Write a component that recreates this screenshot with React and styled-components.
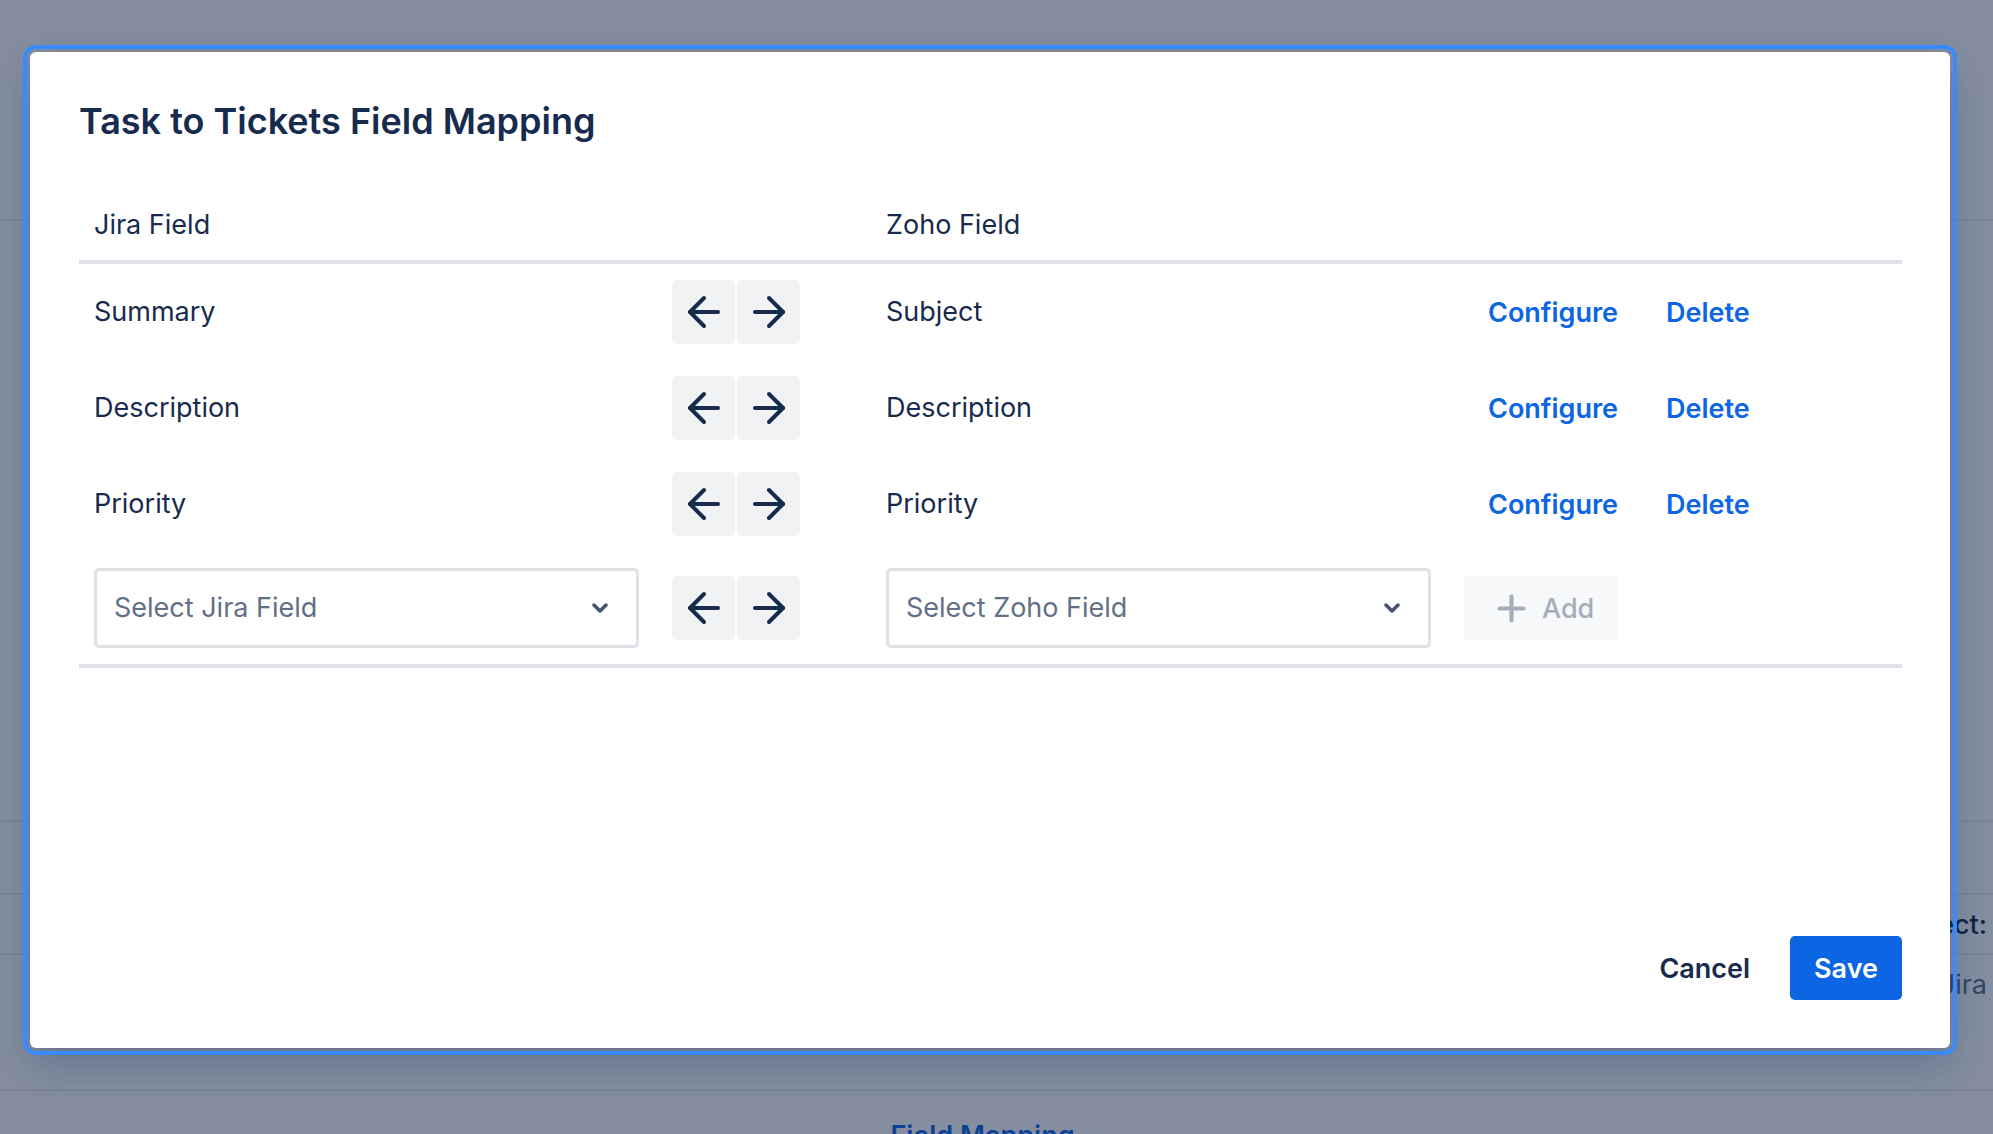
import styled, { createGlobalStyle } from "styled-components";
import { ArrowLeft, ArrowRight, Plus } from "lucide-react";

const GlobalStyle = createGlobalStyle`
  html, body {
    margin: 0;
    padding: 0;
  }
  body {
    font-family: Inter, "Liberation Sans", sans-serif;
    color: #172b4d;
  }
  * {
    box-sizing: border-box;
  }
`;

// page behind the dialog
const Page = styled.div`
  position: relative;
  width: 1993px;
  height: 1134px;
  overflow: hidden;
  background: #ffffff;
  display: flex;
  flex-direction: column;
`;
const PageHeader = styled.header`
  height: 221px;
  flex-shrink: 0;
  border-bottom: 2px solid #ebecf0;
`;
const PageBody = styled.section`
  height: 601px;
  flex-shrink: 0;
  border-bottom: 2px solid #ebecf0;
`;
const Details = styled.section`
  height: 269px;
  flex-shrink: 0;
  border-bottom: 2px solid #ebecf0;
  display: flex;
  flex-direction: column;
  padding-top: 71px;
`;
const DetailRow = styled.div`
  height: 60px;
  display: flex;
  align-items: center;
  justify-content: flex-end;
  padding-right: 6px;
  border-top: 2px solid #ebecf0;
  font-size: 27px;
  color: ${(p) => (p.$muted ? "#626f86" : "#172b4d")};
  font-weight: ${(p) => (p.$muted ? 400 : 500)};
`;
const Tabs = styled.nav`
  display: flex;
  justify-content: center;
  padding: 28px 28px 0 0;
`;
const Tab = styled.span`
  font-size: 27px;
  font-weight: 600;
  color: #0c66e4;
`;

// dialog
const Blanket = styled.div`
  position: absolute;
  inset: 0;
  background: rgba(9, 30, 66, 0.5);
`;
const Modal = styled.div`
  position: absolute;
  left: 30px;
  top: 52px;
  width: 1920px;
  height: 996px;
  background: #ffffff;
  border-radius: 6px;
  outline: 4px solid #388bff;
  outline-offset: 3px;
  box-shadow: 0 16px 40px rgba(9, 30, 66, 0.25);
  display: flex;
  flex-direction: column;
  padding: 46px 48px 48px 49px;
`;
const Title = styled.h1`
  margin: 0 0 54px;
  font-size: 36px;
  line-height: 46px;
  font-weight: 600;
  color: #172b4d;
`;

const Row = styled.div`
  display: grid;
  grid-template-columns: 578px 214px 578px 1fr;
  align-items: center;
  padding: ${(p) => (p.$head ? "8px 0 16px" : "16px 0")};
  border-bottom: ${(p) => (p.$divider ? "4px solid #dfe1e6" : "none")};
  font-size: 27px;
  line-height: 38px;
`;
const Cell = styled.div`
  padding: 0 18px 0 15px;
  display: flex;
  align-items: center;
`;

const ArrowGroup = styled.div`
  display: flex;
  gap: 2px;
`;
const ArrowButton = styled.button`
  width: 63px;
  height: 64px;
  border: none;
  border-radius: 5px;
  background: #f1f2f4;
  color: #172b4d;
  display: flex;
  align-items: center;
  justify-content: center;
  padding: 0;
  cursor: pointer;
`;

const LinkButton = styled.button`
  height: 64px;
  padding: 0 24px;
  border: none;
  background: none;
  font-family: inherit;
  font-size: 27px;
  font-weight: 600;
  color: #0c66e4;
  cursor: pointer;
`;

const Select = styled.div`
  width: 545px;
  height: 80px;
  border: 3px solid #dfe1e6;
  border-radius: 5px;
  background: #ffffff;
  display: flex;
  align-items: center;
  justify-content: space-between;
  padding: 0 28px 0 17px;
  color: #626f86;
  font-size: 27px;
`;

const AddButton = styled.button`
  height: 64px;
  padding: 0 24px;
  border: none;
  border-radius: 5px;
  background: #f7f8f9;
  color: #a5adba;
  display: flex;
  align-items: center;
  gap: 8px;
  font-family: inherit;
  font-size: 27px;
  font-weight: 500;
`;
const IconSlot = styled.span`
  width: 46px;
  display: flex;
  justify-content: center;
`;

const Footer = styled.footer`
  margin-top: auto;
  display: flex;
  justify-content: flex-end;
  gap: 16px;
`;
const FooterButton = styled.button`
  height: 64px;
  padding: 0 24px;
  border: none;
  border-radius: 5px;
  background: ${(p) => (p.$primary ? "#0c66e4" : "transparent")};
  color: ${(p) => (p.$primary ? "#ffffff" : "#172b4d")};
  font-family: inherit;
  font-size: 27px;
  font-weight: 600;
  cursor: pointer;
`;

const Chevron = () => (
  <svg width="16" height="10" viewBox="0 0 16 10" fill="none">
    <path
      d="M2 2l6 6 6-6"
      stroke="#44546f"
      strokeWidth="3.5"
      strokeLinecap="round"
      strokeLinejoin="round"
    />
  </svg>
);

const Arrows = () => (
  <ArrowGroup>
    <ArrowButton>
      <ArrowLeft size={48} strokeWidth={2} />
    </ArrowButton>
    <ArrowButton>
      <ArrowRight size={48} strokeWidth={2} />
    </ArrowButton>
  </ArrowGroup>
);

const mappings = [
  { jira: "Summary", zoho: "Subject" },
  { jira: "Description", zoho: "Description" },
  { jira: "Priority", zoho: "Priority" },
];

const App = () => {
  return (
    <Page>
      <GlobalStyle />
      <PageHeader />
      <PageBody />
      <Details>
        <DetailRow>Project:</DetailRow>
        <DetailRow $muted>Jira</DetailRow>
      </Details>
      <Tabs>
        <Tab>Field Mapping</Tab>
      </Tabs>

      <Blanket />
      <Modal>
        <Title>Task to Tickets Field Mapping</Title>
        <Row $head $divider>
          <Cell>Jira Field</Cell>
          <Cell />
          <Cell>Zoho Field</Cell>
          <Cell />
        </Row>
        {mappings.map((m) => (
          <Row key={m.jira}>
            <Cell>{m.jira}</Cell>
            <Cell>
              <Arrows />
            </Cell>
            <Cell>{m.zoho}</Cell>
            <Cell>
              <LinkButton>Configure</LinkButton>
              <LinkButton>Delete</LinkButton>
            </Cell>
          </Row>
        ))}
        <Row $divider>
          <Cell>
            <Select>
              Select Jira Field
              <Chevron />
            </Select>
          </Cell>
          <Cell>
            <Arrows />
          </Cell>
          <Cell>
            <Select>
              Select Zoho Field
              <Chevron />
            </Select>
          </Cell>
          <Cell>
            <AddButton disabled>
              <IconSlot>
                <Plus size={41} strokeWidth={2.4} />
              </IconSlot>
              Add
            </AddButton>
          </Cell>
        </Row>
        <Footer>
          <FooterButton>Cancel</FooterButton>
          <FooterButton $primary>Save</FooterButton>
        </Footer>
      </Modal>
    </Page>
  );
};

export default App;
